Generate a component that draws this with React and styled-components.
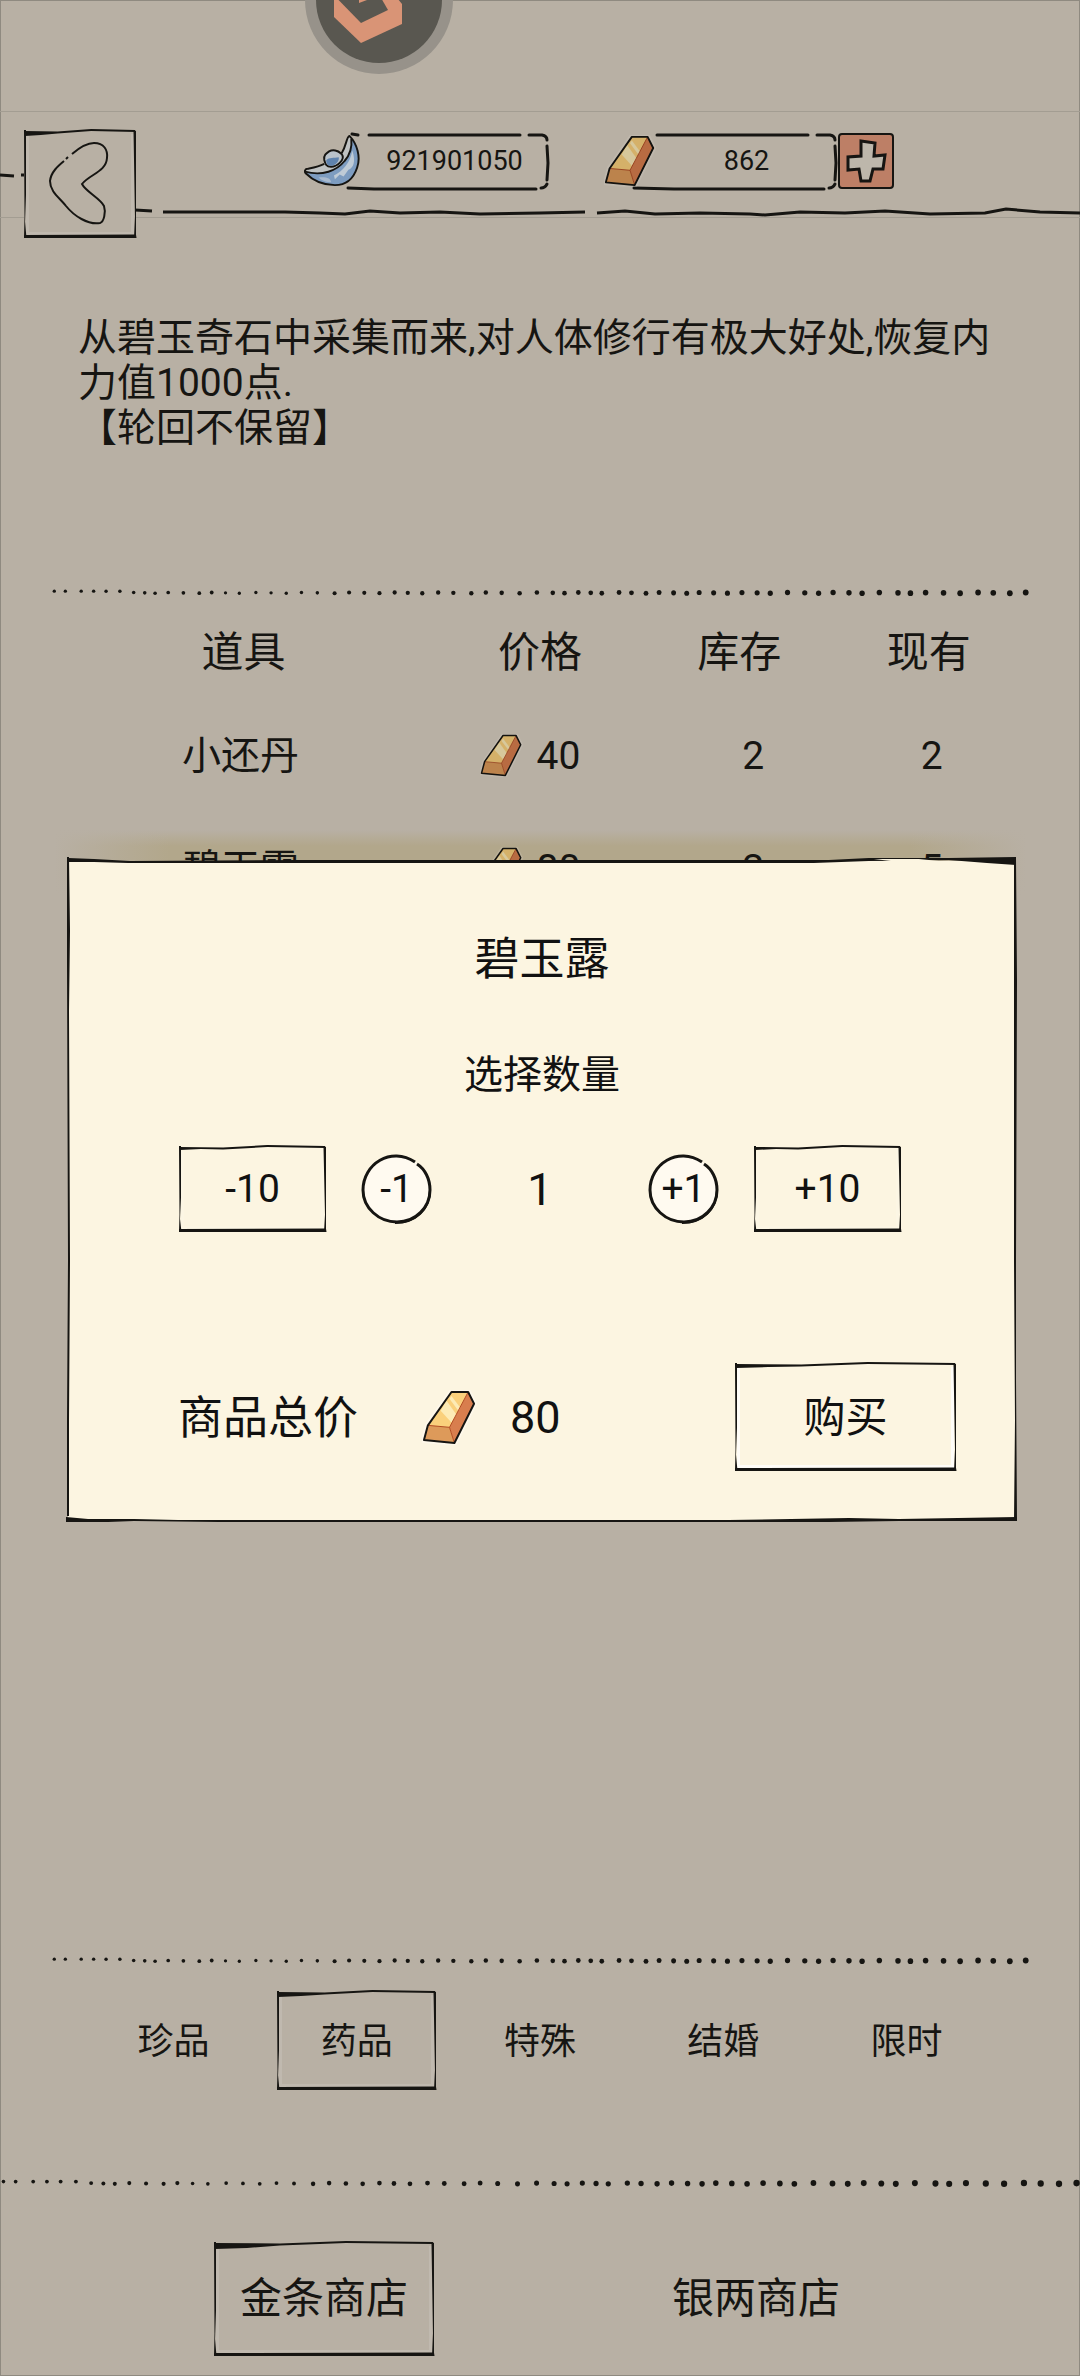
import React, { useState } from 'react';
import styled, { createGlobalStyle, css } from 'styled-components';

const ink = '#161512';
const paper = '#b8b0a4';
const cream = '#fcf5e1';

const GlobalStyle = createGlobalStyle`
  * {
    box-sizing: border-box;
  }
  body {
    margin: 0;
    background: ${paper};
    color: ${ink};
    font-family: Roboto, "Noto Sans CJK SC", sans-serif;
  }
  button {
    font-family: inherit;
    color: inherit;
    background: none;
    border: none;
    padding: 0;
    cursor: pointer;
  }
`;

const Screen = styled.div`
  position: relative;
  min-height: 100vh;
  display: flex;
  flex-direction: column;
  overflow: hidden;
  background: ${paper};
  box-shadow: inset 0 0 0 1px #8f8a80;
`;

const StatusStrip = styled.div`
  height: 111px;
`;

const FloatingBadge = styled.svg`
  position: absolute;
  top: -74px;
  left: 305px;
  width: 148px;
  height: 148px;
`;

const Header = styled.header`
  position: relative;
  display: flex;
  align-items: flex-start;
  justify-content: space-between;
  height: 107px;
  padding: 18px 186px 0 24px;
  border-top: 1px solid #a39d92;
  border-bottom: 1px solid #a39d92;
`;

const HeaderLine = styled.svg`
  position: absolute;
  left: 0;
  bottom: -8px;
  width: 100%;
  height: 60px;
`;

const Frame = styled.svg`
  position: absolute;
  inset: 0;
  width: 100%;
  height: 100%;
  overflow: visible;
  pointer-events: none;
`;

const BackButton = styled.button`
  position: relative;
  width: 112px;
  height: 108px;
  background: ${paper};
`;

const Wallets = styled.div`
  display: flex;
  padding-top: 3px;
`;

const Wallet = styled.div`
  position: relative;
  display: flex;
  align-items: center;
  width: ${({ $width }) => $width}px;
  height: 56px;
  margin-right: ${({ $gap }) => $gap}px;
`;

const Amount = styled.span`
  position: relative;
  flex: 1;
  text-align: center;
  font-size: 27px;
  line-height: 56px;
`;

const CoinIcon = styled.svg`
  position: relative;
  flex: none;
  width: ${({ $size }) => $size}px;
  height: ${({ $size }) => $size}px;
  filter: ${({ $dim }) => ($dim ? 'brightness(0.85)' : 'none')};
`;

const AddButton = styled.button`
  width: 56px;
  height: 56px;

  svg {
    display: block;
  }
`;

const Description = styled.p`
  min-height: 367px;
  margin: 0;
  padding: 98px 78px 0;
  font-size: 39px;
  line-height: 45px;
`;

const Divider = styled.div`
  display: flex;
  align-items: center;
  height: 16px;
  margin: 0 ${({ $inset }) => $inset || 0}px;

  svg {
    display: block;
    width: 100%;
    height: auto;
  }
`;

const ListArea = styled.main`
  flex: 1;
  padding: 0 54px;
`;

const Goods = styled.table`
  width: 100%;
  table-layout: fixed;
  border-collapse: collapse;
  text-align: center;

  th {
    height: 98px;
    padding: 0 0 4px;
    font-size: 42px;
    font-weight: 400;
  }
  th:nth-child(1) {
    width: 39%;
  }
  th:nth-child(2) {
    width: 22%;
  }
  th:nth-child(3) {
    width: 19%;
  }
  td {
    height: 113px;
    padding: 0;
    font-size: 39px;
  }
  td:nth-child(1) {
    padding: 0 6px 8px 0;
  }
  td:nth-child(2) {
    padding-right: 20px;
  }
  td:nth-child(3) {
    padding-left: 28px;
  }
  td:nth-child(4) {
    padding-left: 6px;
  }
`;

const GoodsRow = styled.tr`
  ${({ $selected }) =>
    $selected &&
    css`
      background: linear-gradient(90deg, ${paper}, transparent 12%, transparent 88%, ${paper}),
        linear-gradient(transparent 16%, #b2a78b 30%, #b2a78b 54%, transparent 74%);
    `}
`;

const Price = styled.span`
  display: flex;
  align-items: center;
  justify-content: center;
  gap: 14px;
`;

const Categories = styled.nav`
  display: grid;
  grid-template-columns: repeat(5, 1fr);
  justify-items: center;
  padding: 22px 82px 85px;
`;

const Shops = styled.nav`
  display: grid;
  grid-template-columns: repeat(2, 1fr);
  justify-items: center;
  padding: 51px 108px 20px;
`;

const Tab = styled.button`
  position: relative;
  width: ${({ $large }) => ($large ? 220 : 159)}px;
  height: ${({ $large }) => ($large ? 114 : 99)}px;
  padding-bottom: ${({ $large }) => ($large ? 10 : 6)}px;
  font-size: ${({ $large }) => ($large ? 42 : 36)}px;
`;

const Overlay = styled.div`
  position: fixed;
  inset: 0;
  display: flex;
  align-items: center;
  padding: 6px 64px 0 68px;
`;

const Dialog = styled.section`
  position: relative;
  width: 100%;
  padding: 69px 0 50px;
  background: ${cream};
  color: #111;
`;

const DialogTitle = styled.h2`
  margin: 0;
  text-align: center;
  font-size: 45px;
  font-weight: 400;
  line-height: 60px;
`;

const DialogHint = styled.p`
  margin: 60px 0 0;
  text-align: center;
  font-size: 39px;
  line-height: 50px;
`;

const Stepper = styled.div`
  display: flex;
  align-items: center;
  gap: 35px;
  margin-top: 46px;
  padding: 0 115px 0 111px;
`;

const StepButton = styled.button`
  position: relative;
  width: 147px;
  height: 86px;
  font-size: 39px;
`;

const RoundButton = styled.button`
  position: relative;
  width: 71px;
  height: 70px;
  font-size: 39px;

  span {
    position: relative;
  }
`;

const Quantity = styled.output`
  flex: 1;
  text-align: center;
  font-size: 45px;
`;

const Checkout = styled.div`
  display: flex;
  align-items: center;
  margin-top: 131px;
  padding: 0 60px 0 110px;
  font-size: 45px;
`;

const Label = styled.span`
  padding-bottom: 6px;
`;

const Total = styled.span`
  display: flex;
  align-items: center;
  gap: 33px;
  margin-left: 64px;
`;

const BuyButton = styled.button`
  position: relative;
  width: 221px;
  height: 108px;
  margin-left: auto;
  padding-bottom: 8px;
  font-size: 42px;
`;

// hand drawn rectangle, the brush starts heavy in the top left corner
const SketchFrame = ({ w, h, glow = 'rgba(255,255,255,0.12)', heavy = 6 }) => (
  <Frame viewBox={`0 0 ${w} ${h}`} preserveAspectRatio="none" aria-hidden="true">
    <path d={`M3.5 5V${h - 4.5}H${w - 3.5}V4`} fill="none" stroke={glow} strokeWidth="3" />
    <path
      d={`M0 1L${w * 0.3} 1.5L${w * 0.6} -1L${w - 1} 0L${w} 2L${w * 0.6} 1L${w * 0.3} 3.5L${w * 0.15} ${heavy - 1}L1 ${heavy}Z`}
      fill={ink}
    />
    <path d={`M0 0H2L2 ${h * 0.6}L1 ${h * 0.85}L2.5 ${h}H0L.5 ${h * 0.8}Z`} fill={ink} />
    <path d={`M${w - 2.5} 1H${w}L${w} ${h}H${w - 2}L${w - 1} ${h * 0.8}Z`} fill={ink} />
    <path d={`M0 ${h - 3}L${w} ${h - 3.5}L${w + 0.5} ${h}H0Z`} fill={ink} />
  </Frame>
);

const DialogFrame = () => (
  <Frame viewBox="0 0 947 661" preserveAspectRatio="none" aria-hidden="true">
    <path d="M0 -3L26 -2L62 0L230 -1H760L800 -3L880 -3L947 -4V4L918 2L880 -1L800 0L745 2H60L26 1L0 1Z" fill={ink} />
    <path d="M805 -2L822 0H870L850 -2Z" fill={cream} />
    <path d="M-1 -4H1L2 70L1 150L2 400L1 560L1 656H-1L-1 560L0 400L-1 100Z" fill={ink} />
    <path d="M945 -2H947L948 120L947 400L947 520L948 661H945L946 560L945 400Z" fill={ink} />
    <path d="M-2 657L20 659L66 659L110 660H660L780 658L830 659L948 657V661L830 661L760 662L660 662H150L66 661L40 662L-2 662Z" fill={ink} />
  </Frame>
);

const RoundFrame = () => (
  <Frame viewBox="0 0 71 70" aria-hidden="true">
    <circle cx="35" cy="35" r="33" fill="#fffaf0" />
    <path d="M54 8C30 -8 2 10 2 36C2 54 18 68 36 68C55 68 69 53 69 36C69 25 64 15 56 10" fill="none" stroke={ink} strokeWidth="3" />
    <path d="M69 36C69 56 54 69 34 69" fill="none" stroke={ink} strokeWidth="2" />
  </Frame>
);

const PillFrame = ({ w, tick }) => (
  <Frame viewBox={`0 0 ${w} 56`} preserveAspectRatio="none" fill="none" stroke={ink} strokeWidth="3" strokeLinecap="round" aria-hidden="true">
    {tick && <path d="M48 1L54 2" />}
    <path d={`M${tick ? 65 : 53} 2H${w - 29}M${w - 20} 2H${w - 7}Q${w - 2} 3 ${w - 2} 7`} />
    <path d={`M${w - 2} 13L${w - 1} 30L${w - 2} 47M${w - 2} 51Q${w - 4} 55 ${w - 8} 55`} />
    <path d={`M${tick ? 44 : 30} 55L70 56H${w - 13}`} />
  </Frame>
);

const GoldIcon = ({ size, dim }) => (
  <CoinIcon viewBox="-1 -1 56 56" $size={size} $dim={dim} aria-hidden="true">
    <path d="M29 1L46 1L52 13L32 53L1 50L5 35Z" fill="none" stroke="#fffaf0" strokeOpacity={dim ? 0.2 : 0.6} strokeWidth="6" />
    <path d="M29 1L46 1L27 37L5 35Z" fill="#fad07c" />
    <path d="M46 1L52 13L32 53L27 37Z" fill="#d87e4e" />
    <path d="M5 35L27 37L32 53L1 50Z" fill="#dd9a5a" />
    <path d="M24 10L34 24L29 32L18 20Z" fill="#fdebb6" />
    <path d="M29 5L38 17L36 20L27 8Z" fill="#fdebb6" />
    <path d="M5 35L27 37L46 1M27 37L32 53" fill="none" stroke="#b14a20" strokeWidth="1" />
    <path d="M29 1L46 1L52 13L32 53L1 50L5 35Z" fill="none" stroke={ink} strokeWidth="2" strokeLinejoin="round" />
  </CoinIcon>
);

const SilverIcon = ({ size }) => (
  <CoinIcon viewBox="-1 -1 58 54" $size={size} aria-hidden="true">
    <path d="M0 37C0 34 3 34 7 33C12 32 17 30 20 28L37 20C40 14 42 8 44 1L48 3C50 12 47 20 41 26C33 36 18 42 0 37Z" fill="#bfc2c2" />
    <path d="M0 37C18 42 33 36 41 26C47 19 49 12 48 2C56 10 58 24 54 33C49 46 42 51 31 51C20 51 8 47 0 37Z" fill="#7d9cc0" />
    <path d="M30 41C40 36 47 27 49 15C53 27 50 33 45 35L40 42L36 40L31 45Z" fill="#bfcbd6" />
    <path d="M14 43C22 42 27 44 27 48C22 48 17 46 14 43Z" fill="#a9bace" />
    <path d="M20 25C19 20 22 18 25 16C29 14 34 15 37 18C41 21 39 25 36 28C33 31 30 32 27 32C22 32 21 29 20 25Z" fill="#b9c2ca" stroke={ink} strokeWidth="2" />
    <path d="M22 25C25 22 30 23 35 22C36 26 31 31 27 31C23 31 22 28 22 25Z" fill="#5f83ae" />
    <path d="M0 37C18 42 33 36 41 26C47 19 49 12 48 3" fill="none" stroke={ink} strokeWidth="2" />
    <path
      d="M20 29C14 32 8 33 3 34C0 34 -1 37 1 39C9 47 20 51 31 51C42 51 50 45 54 33C58 22 54 8 46 0C43 1 43 10 38 18"
      fill="none"
      stroke={ink}
      strokeWidth="2"
      strokeLinejoin="round"
    />
  </CoinIcon>
);

const dots = [
  4, 20, 43, 61, 79, 99, 119, 135, 150, 169, 191, 214, 232, 252, 272, 296, 318, 340, 362, 385, 410, 431, 453, 475,
  497, 516, 537, 560, 582, 608, 629, 652, 678, 703, 726, 743, 763, 781, 797, 822, 840, 861, 880, 901, 920, 938, 959,
  979, 1000, 1022, 1041, 1066, 1091, 1111, 1132, 1155, 1174, 1199, 1226, 1244, 1266, 1292, 1316, 1342, 1364, 1388, 1411,
];

const DottedLine = ({ inset }) => (
  <Divider $inset={inset}>
    <svg viewBox="0 0 1415 16" aria-hidden="true">
      {dots.map((x, i) => (
        <ellipse
          key={x}
          cx={x}
          cy={i < 6 ? 6 : 8 + (i % 3) / 2}
          rx={(i > 12 && i < 20 ? 2 : 2.4) + (i / dots.length) * 1.8}
          ry={(i > 12 && i < 20 ? 2 : 2.4) + (i / dots.length) * 2}
          fill={ink}
        />
      ))}
    </svg>
  </Divider>
);

const goods = [
  { name: '小还丹', price: 40, stock: 2, owned: 2 },
  { name: '碧玉露', price: 80, stock: 2, owned: 5 },
];
const categories = ['珍品', '药品', '特殊', '结婚', '限时'];
const shops = ['金条商店', '银两商店'];

const App = () => {
  const [category, setCategory] = useState('药品');
  const [shop, setShop] = useState('金条商店');
  const [count, setCount] = useState(1);
  const selected = goods[1];
  const change = (n) => setCount((c) => Math.max(1, c + n));

  return (
    <>
      <GlobalStyle />
      <Screen>
        <StatusStrip />
        <FloatingBadge viewBox="-74 -74 148 148" aria-hidden="true">
          <circle r="74" fill="#97928a" />
          <circle r="63" fill="#595750" />
          <path d="M-45 -18V17L-18 43L23 24V4L10 -12Z" fill="#d99476" />
          <path d="M-56 -16L-18 23L9 10L-6 -16Z" fill="#595750" />
          <path d="M-20 -8V3L-4 -3V-10Z" fill="#d99476" />
        </FloatingBadge>

        <Header>
          <HeaderLine viewBox="0 0 1080 60" preserveAspectRatio="none" fill="none" stroke={ink} strokeWidth="3" aria-hidden="true">
            <path d="M0 10L14 11M21 10H26" />
            <path d="M135 45L152 46M163 47H285L320 48L345 49L370 46L400 48L440 47L480 49L540 48L585 47" />
            <path d="M597 48L625 46L655 49L700 48L750 49L765 50L800 47L845 48L885 46L930 49L985 48L1006 44L1040 47L1080 48" />
          </HeaderLine>
          <BackButton aria-label="返回">
            <SketchFrame w={112} h={108} />
            <Frame viewBox="0 0 112 108" fill="none" stroke={ink} strokeWidth="2" aria-hidden="true">
              <path d="M48 24C55 18 62 13 70 13C80 13 84 20 83 28C82 42 66 44 58 54C62 62 76 68 80 76C82 82 80 92 76 93C64 95 50 86 42 76C36 68 26 62 26 51C27 42 34 36 40 31M42 29L44 27" />
            </Frame>
          </BackButton>
          <Wallets>
            <Wallet $width={245} $gap={55}>
              <PillFrame w={245} tick />
              <SilverIcon size={56} />
              <Amount>921901050</Amount>
            </Wallet>
            <Wallet $width={233} $gap={1}>
              <PillFrame w={233} />
              <GoldIcon size={52} dim />
              <Amount>862</Amount>
            </Wallet>
            <AddButton aria-label="充值">
              <svg width="56" height="56" viewBox="0 0 56 56">
                <rect x="1" y="1" width="54" height="54" rx="3" fill="#bd7f66" stroke={ink} strokeWidth="2" />
                <path d="M23 8L37 10L36 23L47 22L45 36L35 36L32 48H23L21 36L10 37V24L23 23Z" fill="#bdb7ab" stroke={ink} strokeWidth="3" />
              </svg>
            </AddButton>
          </Wallets>
        </Header>

        <Description>
          从碧玉奇石中采集而来,对人体修行有极大好处,恢复内力值1000点.
          <br />
          【轮回不保留】
        </Description>
        <DottedLine inset={51} />

        <ListArea>
          <Goods>
            <thead>
              <tr>
                <th>道具</th>
                <th>价格</th>
                <th>库存</th>
                <th>现有</th>
              </tr>
            </thead>
            <tbody>
              {goods.map((item) => (
                <GoodsRow key={item.name} $selected={item === selected}>
                  <td>{item.name}</td>
                  <td>
                    <Price>
                      <GoldIcon size={43} dim />
                      {item.price}
                    </Price>
                  </td>
                  <td>{item.stock}</td>
                  <td>{item.owned}</td>
                </GoodsRow>
              ))}
            </tbody>
          </Goods>
        </ListArea>

        <DottedLine inset={51} />
        <Categories>
          {categories.map((name) => (
            <Tab key={name} onClick={() => setCategory(name)}>
              {name === category && <SketchFrame w={159} h={99} />}
              {name}
            </Tab>
          ))}
        </Categories>

        <DottedLine />
        <Shops>
          {shops.map((name) => (
            <Tab key={name} $large onClick={() => setShop(name)}>
              {name === shop && <SketchFrame w={220} h={114} heavy={7} />}
              {name}
            </Tab>
          ))}
        </Shops>
      </Screen>

      <Overlay>
        <Dialog role="dialog" aria-labelledby="dialog-title">
          <DialogFrame />
          <DialogTitle id="dialog-title">{selected.name}</DialogTitle>
          <DialogHint>选择数量</DialogHint>
          <Stepper>
            <StepButton onClick={() => change(-10)}>
              <SketchFrame w={147} h={86} heavy={4} />
              -10
            </StepButton>
            <RoundButton onClick={() => change(-1)}>
              <RoundFrame />
              <span>-1</span>
            </RoundButton>
            <Quantity>{count}</Quantity>
            <RoundButton onClick={() => change(1)}>
              <RoundFrame />
              <span>+1</span>
            </RoundButton>
            <StepButton onClick={() => change(10)}>
              <SketchFrame w={147} h={86} heavy={4} />
              +10
            </StepButton>
          </Stepper>
          <Checkout>
            <Label>商品总价</Label>
            <Total>
              <GoldIcon size={55} />
              {selected.price * count}
            </Total>
            <BuyButton>
              <SketchFrame w={221} h={108} glow="#fffdf8" heavy={5} />
              购买
            </BuyButton>
          </Checkout>
        </Dialog>
      </Overlay>
    </>
  );
};

export default App;
